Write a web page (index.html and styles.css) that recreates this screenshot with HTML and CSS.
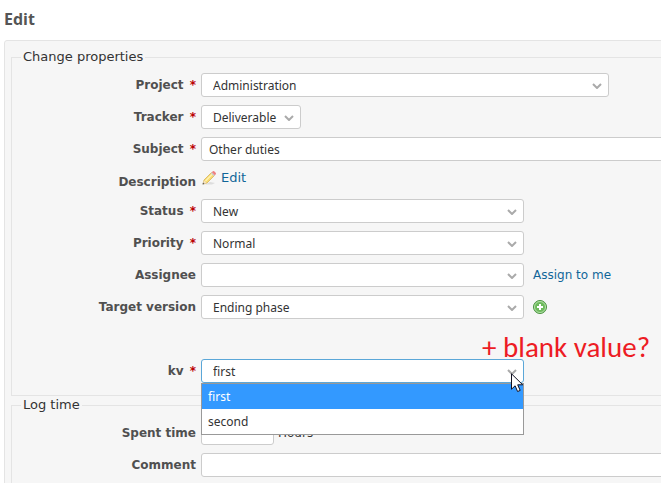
FILE: index.html
```html
<!DOCTYPE html>
<html lang="en">
<head>
    <meta charset="UTF-8">
    <meta name="viewport" content="width=device-width, initial-scale=1.0">
    <title>Edit</title>
    <link rel="stylesheet" href="styles.css">
</head>
<body>

    <svg class="defs" aria-hidden="true">
        <symbol id="chevron" viewBox="0 0 10 6">
            <path d="M1 1l4 4 4-4" fill="none" stroke="#aaa" stroke-width="2"/>
        </symbol>
    </svg>

    <main class="page">
        <h3>Edit</h3>

        <form class="box">
            <fieldset>
                <legend>Change properties</legend>

                <div class="row">
                    <label for="project">Project <span class="required">*</span></label>
                    <div class="select wide">
                        <select id="project"><option>Administration</option></select>
                        <svg class="arrow"><use href="#chevron"/></svg>
                    </div>
                </div>

                <div class="row">
                    <label for="tracker">Tracker <span class="required">*</span></label>
                    <div class="select short">
                        <select id="tracker"><option>Deliverable</option></select>
                        <svg class="arrow"><use href="#chevron"/></svg>
                    </div>
                </div>

                <div class="row">
                    <label for="subject">Subject <span class="required">*</span></label>
                    <input type="text" id="subject" value="Other duties">
                </div>

                <div class="row description">
                    <span class="label">Description</span>
                    <a href="#" class="icon-edit">
                        <svg width="16" height="16" viewBox="0 0 16 16">
                            <path d="M4 14.500h7l3-1.500-5-1z" fill="#ddd"/>
                            <path d="M2 14l1-4 7.500-7.500 3 3L6 13z" fill="#f8dc72" stroke="#d3aa50" stroke-width=".7"/>
                            <path d="M4.500 11l7-7" stroke="#fff3b5" stroke-width="1.200"/>
                            <path d="M2 14l1-3.500L5.500 13z" fill="#f3e3c8"/>
                            <path d="M1.500 14.500l.6-2 1.400 1.400z" fill="#555"/>
                            <path d="M9.800 3.200l1-1 3 3-1 1z" fill="#c9cdd3"/>
                            <path d="M10.800 2.200l1-1q.7-.5 1.400.1l1.500 1.500q.6.7.1 1.400l-1 1z" fill="#ee8080"/>
                        </svg>
                        <span>Edit</span>
                    </a>
                </div>

                <div class="row">
                    <label for="status">Status <span class="required">*</span></label>
                    <div class="select">
                        <select id="status"><option>New</option></select>
                        <svg class="arrow"><use href="#chevron"/></svg>
                    </div>
                </div>

                <div class="row">
                    <label for="priority">Priority <span class="required">*</span></label>
                    <div class="select">
                        <select id="priority"><option>Normal</option></select>
                        <svg class="arrow"><use href="#chevron"/></svg>
                    </div>
                </div>

                <div class="row">
                    <label for="assignee">Assignee</label>
                    <div class="field">
                        <div class="select">
                            <select id="assignee"><option></option></select>
                            <svg class="arrow"><use href="#chevron"/></svg>
                        </div>
                        <a href="#">Assign to me</a>
                    </div>
                </div>

                <div class="row version">
                    <label for="version">Target version</label>
                    <div class="field">
                        <div class="select">
                            <select id="version"><option>Ending phase</option></select>
                            <svg class="arrow"><use href="#chevron"/></svg>
                        </div>
                        <a href="#" class="icon-add" aria-label="New version">
                            <svg width="14" height="14" viewBox="0 0 14 14">
                                <circle cx="7" cy="7" r="6.500" fill="#6dba5c" stroke="#4a9340"/>
                                <circle cx="7" cy="7" r="5.500" fill="none" stroke="#b5dfab"/>
                                <path d="M7 4v6M4 7h6" stroke="#fff" stroke-width="2"/>
                            </svg>
                        </a>
                    </div>
                </div>

                <div class="row">
                    <label for="kv">kv <span class="required">*</span></label>
                    <div class="select open">
                        <select id="kv"><option>first</option><option>second</option></select>
                        <svg class="arrow"><use href="#chevron"/></svg>
                        <ul class="options">
                            <li class="selected">first</li>
                            <li>second</li>
                        </ul>
                        <svg class="cursor" width="13" height="20" viewBox="0 0 13 20">
                            <path d="M.5.8v15.400l3.600-3.400 2.500 5.700 2.600-1.100-2.500-5.600h5z" fill="#fff" stroke="#112"/>
                        </svg>
                        <span class="note">+ blank value?</span>
                    </div>
                </div>
            </fieldset>

            <fieldset>
                <legend>Log time</legend>

                <div class="row">
                    <label for="hours">Spent time</label>
                    <div class="hours"><input type="text" id="hours"> Hours</div>
                </div>

                <div class="row">
                    <label for="comment">Comment</label>
                    <input type="text" id="comment">
                </div>
            </fieldset>
        </form>
    </main>

</body>
</html>
```

FILE: styles.css
```css
* {
    box-sizing: border-box;
}

body {
    margin: 0;
    overflow: hidden;
    font-family: Verdana, "DejaVu Sans", sans-serif;
    font-size: 12px;
    line-height: 16px;
    color: #333;
    background: white;
}

.defs {
    display: none;
}

.page {
    margin: 0 4px;
    overflow: hidden;
}

h3 {
    margin: 0;
    padding: 9px 0 11px;
    font-family: "Trebuchet MS", "Open Sans", sans-serif;
    font-size: 16px;
    line-height: 20px;
    color: #555;
}

/* the form runs off the right edge of the page */
.box {
    margin-right: -20px;
    padding: 8px 6px 0;
    background: #f6f6f6;
    border: 1px solid #e4e4e4;
    border-radius: 3px;
}

fieldset {
    margin: 0 0 1px;
    padding: 8px 0 4px;
    border: 1px solid #e4e4e4;
    min-width: 0;
}

legend {
    margin-left: 9px;
    padding: 0 2px;
    font-size: 13px;
}

.row {
    display: grid;
    grid-template-columns: 184px 1fr;
    column-gap: 5px;
    align-items: center;
    min-height: 24px;
    margin-bottom: 8px;
}

.row.description {
    min-height: 22px;
}

.row.version {
    margin-bottom: 40px;
}

label, .label {
    text-align: right;
    font-weight: bold;
    color: #505050;
}

.description .label {
    padding-top: 3px;
}

.required {
    margin-left: 2px;
    color: #b00;
}

.field {
    display: flex;
    align-items: center;
    gap: 9px;
}

.select {
    position: relative;
    width: 323px;
}

.select.wide {
    width: 408px;
}

.select.short {
    width: 100px;
}

input, select {
    display: block;
    width: 100%;
    height: 24px;
    margin: 0;
    padding: 0 7px;
    font-family: Tahoma, "Noto Sans", sans-serif;
    font-size: 12px;
    color: #333;
    background: white;
    border: 1px solid #ccc;
    border-radius: 3px;
}

select {
    appearance: none;
    padding: 0 11px;
}

.open select {
    border-color: #5ba7d8;
}

.arrow {
    position: absolute;
    right: 7px;
    top: 10px;
    width: 10px;
    height: 6px;
    pointer-events: none;
}

.options {
    position: absolute;
    top: 24px;
    left: 0;
    width: 100%;
    margin: 0;
    padding: 0;
    list-style: none;
    font-family: Tahoma, "Noto Sans", sans-serif;
    background: white;
    border: 1px solid #999;
    z-index: 1;
}

.options li {
    padding: 0 6px;
    line-height: 25px;
}

.options .selected {
    color: white;
    background: #3399ff;
}

.cursor {
    position: absolute;
    right: 0;
    top: 14px;
    z-index: 2;
}

.note {
    position: absolute;
    left: 281px;
    top: -29px;
    font-family: Calibri, Lato, sans-serif;
    font-size: 29px;
    line-height: 34px;
    color: #ed1c24;
    white-space: nowrap;
}

a {
    color: #169;
    text-decoration: none;
}

.icon-edit {
    display: flex;
    align-items: center;
    gap: 4px;
    padding-bottom: 4px;
    font-size: 13px;
}

.icon-add svg {
    display: block;
}

.hours {
    display: flex;
    align-items: center;
    gap: 4px;
}

.hours input {
    width: 73px;
}
```
